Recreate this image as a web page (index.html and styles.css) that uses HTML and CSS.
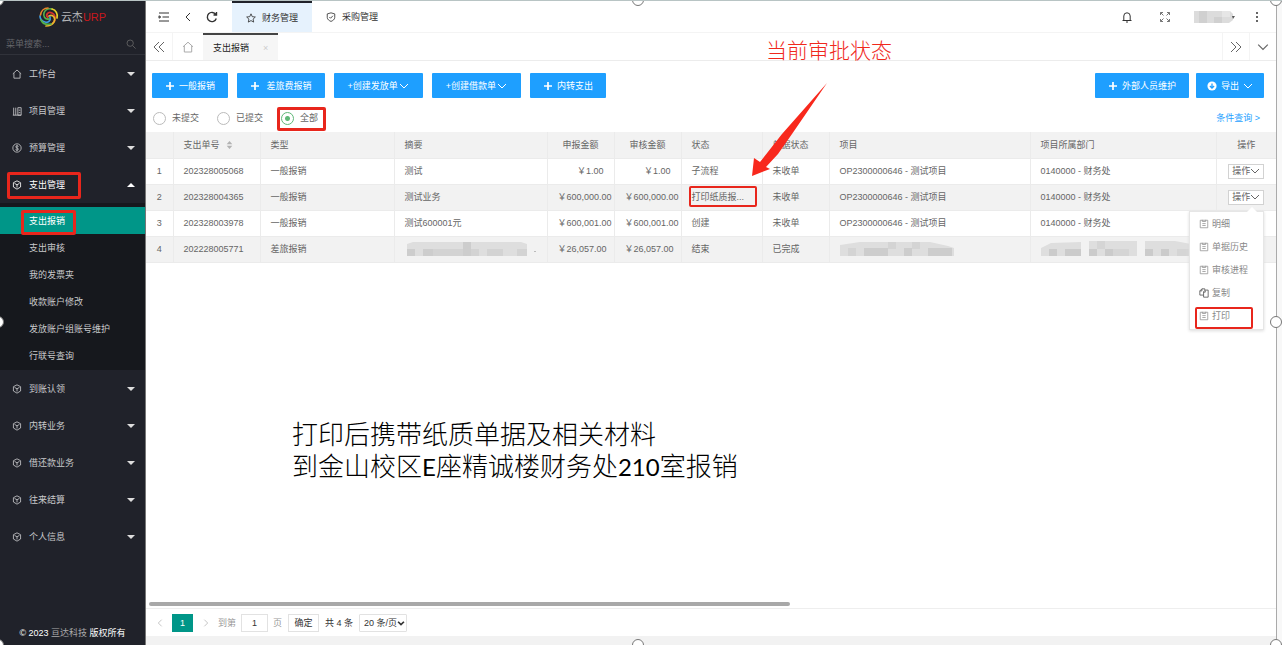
FILE: index.html
```html
<!DOCTYPE html>
<html lang="zh-CN">
<head>
<meta charset="utf-8">
<title>云杰URP</title>
<link rel="stylesheet" href="styles.css">
</head>
<body>
<svg class="defs" aria-hidden="true">
  <symbol id="plus" viewBox="0 0 10 10"><path d="M5 1v8M1 5h8" stroke-width="1.7"/></symbol>
  <symbol id="down" viewBox="0 0 10 10"><path d="M1 3l4 4 4-4"/></symbol>
  <symbol id="home" viewBox="0 0 12 12"><path d="M1 5.8L6 1.2l5 4.6M2.3 5v6h7.4V5"/></symbol>
  <symbol id="cube" viewBox="0 0 12 12"><path d="M6 1l4.3 2.2v5.2L6 11 1.7 8.400V3.200zM3 4l3 1.800L9 4M6 5.800V9"/></symbol>
  <symbol id="doc" viewBox="0 0 12 12"><path d="M1.500 1.500h9v9h-9zM4 1v2h4V1M4 5.500h4M4 7.800h4"/></symbol>
</svg>
<div class="app">
  <aside class="sidebar">
    <div class="logo">
      <svg class="logo-mark" viewBox="0 0 20 20" fill="none" stroke-width="1.700" stroke-linecap="round">
        <path stroke="#d8322c" d="M9 11C6 8 9 4 13 6c4 2 4 7 1 10"/>
        <path stroke="#e8b52c" d="M10 9c4-2 7 2 5 6-2 3-5 4-8 4"/>
        <path stroke="#3c9be0" d="M11 10c1 4-2 6-5 5-4-1-5-4-5-6"/>
        <path stroke="#54b04a" d="M10 12C6 13 4 9 5 6c1-3 4-5 8-4"/>
        <path stroke="#e8872c" d="M1.500 8C2 4 5 1 9 1"/>
        <path stroke="#e8d22c" d="M13 2c4 1 6 5 5 9"/>
        <path stroke="#54b04a" d="M2 13c2 4 6 5 10 4"/>
      </svg>
      <span>云杰<b>URP</b></span>
    </div>
    <div class="search">
      <input type="text" placeholder="菜单搜索..." aria-label="菜单搜索">
      <svg class="icon" viewBox="0 0 12 12"><circle cx="5" cy="5" r="3.800"/><path d="M8 8l3.500 3.500"/></svg>
    </div>
    <nav class="menu">
      <a class="item" href="#"><svg class="icon"><use href="#home"/></svg>工作台<i class="caret"></i></a>
      <a class="item" href="#"><svg class="icon" viewBox="0 0 12 12"><path d="M2 2v9M4.500 2v9M7 2h4v9H7zM8 5h2M8 8h2M1 11h10"/></svg>项目管理<i class="caret"></i></a>
      <a class="item" href="#"><svg class="icon" viewBox="0 0 12 12"><circle cx="6" cy="6" r="5"/><path d="M7.800 4.200C7 3 4.300 3.300 4.400 4.700 4.500 6.200 7.700 5.700 7.700 7.300 7.700 9 4.700 9 4.200 7.700M6 2.500v7"/></svg>预算管理<i class="caret"></i></a>
      <a class="item open mark mark-group" href="#"><svg class="icon"><use href="#cube"/></svg>支出管理<i class="caret up"></i></a>
      <div class="submenu">
        <a class="active mark mark-sub" href="#">支出报销</a>
        <a href="#">支出审核</a>
        <a href="#">我的发票夹</a>
        <a href="#">收款账户修改</a>
        <a href="#">发放账户组账号维护</a>
        <a href="#">行联号查询</a>
      </div>
      <a class="item" href="#"><svg class="icon"><use href="#cube"/></svg>到账认领<i class="caret"></i></a>
      <a class="item" href="#"><svg class="icon"><use href="#cube"/></svg>内转业务<i class="caret"></i></a>
      <a class="item" href="#"><svg class="icon"><use href="#cube"/></svg>借还款业务<i class="caret"></i></a>
      <a class="item" href="#"><svg class="icon"><use href="#cube"/></svg>往来结算<i class="caret"></i></a>
      <a class="item" href="#"><svg class="icon"><use href="#cube"/></svg>个人信息<i class="caret"></i></a>
    </nav>
    <footer class="copyright">© 2023 <span>亘达科技</span> 版权所有</footer>
  </aside>

  <main class="main">
    <header class="topbar">
      <button class="tool" aria-label="收起菜单"><svg class="icon" viewBox="0 0 12 12"><path d="M1 2h10M4.500 6H11M1 10h10M1 4.800v2.400L2.800 6z"/></svg></button>
      <button class="tool" aria-label="后退"><svg class="icon" viewBox="0 0 12 12"><path d="M8 2L4 6l4 4"/></svg></button>
      <button class="tool" aria-label="刷新"><svg class="icon bold" viewBox="0 0 12 12"><path d="M10.300 7.500A4.600 4.600 0 1 1 9.800 3.500M10.500 1v3H7.500"/></svg></button>
      <a class="module current" href="#"><svg class="icon" viewBox="0 0 12 12"><path d="M6 1l1.500 3.400 3.700.4-2.700 2.500.7 3.600L6 9.100l-3.200 1.800.7-3.600L.8 4.800l3.700-.4z"/></svg>财务管理</a>
      <a class="module" href="#"><svg class="icon" viewBox="0 0 12 12"><path d="M6 1l4.500 1.300v4.200C10.500 9 8 10.500 6 11.300 4 10.500 1.500 9 1.500 6.500V2.300zM4 6l1.500 1.500L8.300 4.500"/></svg>采购管理</a>
      <div class="user-tools">
        <button class="tool" aria-label="通知"><svg class="icon" viewBox="0 0 12 12"><path d="M1.500 9.500h9M2.800 9.500V5a3.200 3.200 0 0 1 6.400 0v4.500M5 11h2"/></svg></button>
        <button class="tool" aria-label="全屏"><svg class="icon thin" viewBox="0 0 12 12"><path d="M1.500 4V1.500H4M1.500 1.500l3 3M8 1.500h2.500V4M10.500 1.500l-3 3M1.500 8v2.500H4M1.500 10.500l3-3M10.500 8v2.500H8M10.500 10.500l-3-3"/></svg></button>
        <button class="tool user" aria-label="用户"><svg viewBox="0 0 42 14"><path fill="#dcdcdc" d="M0 1h36l3 3v6l-4 3H0z"/><path fill="#d0d0d0" d="M5 1h8v12H5zM20 7h8v6h-8z"/><path fill="#e6e6e6" d="M28 1h8v6h-8z"/><path fill="#555" d="M38 6h3l-2 3z"/></svg></button>
        <button class="tool" aria-label="更多"><svg class="icon dots" viewBox="0 0 12 12"><circle cx="6" cy="2" r="1"/><circle cx="6" cy="6" r="1"/><circle cx="6" cy="10" r="1"/></svg></button>
      </div>
    </header>

    <div class="tabs">
      <button class="tool" aria-label="向左"><svg class="icon" viewBox="0 0 12 12"><path d="M6 1L1 6l5 5M11 1L6 6l5 5"/></svg></button>
      <button class="tool line" aria-label="首页"><svg class="icon pale"><use href="#home"/></svg></button>
      <a class="tab" href="#">支出报销<span class="close">×</span></a>
      <div class="tab-tools">
        <button class="tool line" aria-label="向右"><svg class="icon" viewBox="0 0 12 12"><path d="M1 1l5 5-5 5M6 1l5 5-5 5"/></svg></button>
        <button class="tool line" aria-label="展开"><svg class="icon"><use href="#down"/></svg></button>
      </div>
    </div>

    <div class="actions">
      <button class="btn"><svg class="icon"><use href="#plus"/></svg>一般报销</button>
      <button class="btn"><svg class="icon"><use href="#plus"/></svg>&nbsp;差旅费报销</button>
      <button class="btn wide">+创建发放单<svg class="icon"><use href="#down"/></svg></button>
      <button class="btn wide">+创建借款单<svg class="icon"><use href="#down"/></svg></button>
      <button class="btn"><svg class="icon"><use href="#plus"/></svg>内转支出</button>
      <div class="actions-right">
        <button class="btn"><svg class="icon"><use href="#plus"/></svg>外部人员维护</button>
        <button class="btn export"><svg class="icon" viewBox="0 0 12 12"><circle cx="6" cy="6" r="5.500" fill="#fff" stroke="none"/><path stroke="#1e9fff" stroke-width="1.500" d="M6 3v5.500M3.500 6L6 8.500 8.500 6"/></svg>导出<svg class="icon"><use href="#down"/></svg></button>
      </div>
    </div>

    <div class="filters">
      <label><input type="radio" name="state">未提交</label>
      <label><input type="radio" name="state">已提交</label>
      <label class="mark mark-all"><input type="radio" name="state" checked>全部</label>
      <a class="query" href="#">条件查询 &gt;</a>
    </div>

    <div class="table-area">
      <table>
        <colgroup><col class="c-no"><col class="c-id"><col class="c-type"><col class="c-sum"><col class="c-amt"><col class="c-amt"><col class="c-state"><col class="c-amt"><col class="c-proj"><col class="c-dept"><col class="c-op"></colgroup>
        <thead>
          <tr><th></th><th>支出单号 <svg class="sort" viewBox="0 0 8 10"><path d="M4 0l3.500 4h-7zM4 10L.5 6h7z"/></svg></th><th>类型</th><th>摘要</th><th class="center">申报金额</th><th class="center">审核金额</th><th>状态</th><th>单据状态</th><th>项目</th><th>项目所属部门</th><th class="center fixed">操作</th></tr>
        </thead>
        <tbody>
          <tr><td class="center">1</td><td>202328005068</td><td>一般报销</td><td>测试</td><td class="num">￥1.00</td><td class="num">￥1.00</td><td>子流程</td><td>未收单</td><td>OP2300000646 - 测试项目</td><td>0140000 - 财务处</td><td class="center fixed"><button class="op">操作<svg class="icon"><use href="#down"/></svg></button></td></tr>
          <tr><td class="center">2</td><td>202328004365</td><td>一般报销</td><td>测试业务</td><td class="num">￥600,000.00</td><td class="num">￥600,000.00</td><td class="mark mark-state">打印纸质报...</td><td>未收单</td><td>OP2300000646 - 测试项目</td><td>0140000 - 财务处</td><td class="center fixed"><button class="op">操作<svg class="icon"><use href="#down"/></svg></button>
            <div class="dropdown">
              <a href="#"><svg class="icon"><use href="#doc"/></svg>明细</a>
              <a href="#"><svg class="icon"><use href="#doc"/></svg>单据历史</a>
              <a href="#"><svg class="icon"><use href="#doc"/></svg>审核进程</a>
              <a href="#"><svg class="icon dark" viewBox="0 0 12 12"><path d="M5.500 4.500l2-2H11V11H5.500zM5.500 8.500H1V3.500L3.500 1H7v1.500M3.500 1v2.500H1M7.500 3v2H5.500"/></svg>复制</a>
              <a class="mark mark-print" href="#"><svg class="icon"><use href="#doc"/></svg>打印</a>
            </div></td></tr>
          <tr><td class="center">3</td><td>202328003978</td><td>一般报销</td><td>测试600001元</td><td class="num">￥600,001.00</td><td class="num">￥600,001.00</td><td>创建</td><td>未收单</td><td>OP2300000646 - 测试项目</td><td>0140000 - 财务处</td><td class="fixed"></td></tr>
          <tr><td class="center">4</td><td>202228005771</td><td>差旅报销</td>
            <td><svg class="mosaic" width="132" height="16" viewBox="0 0 132 16"><path fill="#dedede" d="M2 3l6-2h108l6 2v12H2z"/><path fill="#cdcdcd" d="M2 8h8v7H2zM18 8h10v7H18zM58 1h8v14h-8z"/><path fill="#d3d3d3" d="M28 8h30v7H28zM66 8h8v7h-8zM82 8h16v7H82zM112 8h10v7h-10z"/><path fill="#bbb" d="M129 10h2v1h-2z"/></svg></td>
            <td class="num">￥26,057.00</td><td class="num">￥26,057.00</td><td>结束</td><td>已完成</td>
            <td><svg class="mosaic" width="114" height="16" viewBox="0 0 114 16"><path fill="#dedede" d="M0 4l20-3h70l18 4 6 2v8H0z"/><path fill="#cdcdcd" d="M24 7h24v8H24zM64 7h8v8h-8zM88 7h24v8H88z"/><path fill="#d4d4d4" d="M8 7h8v8H8zM48 1h8v7h-8zM72 1h8v7h-8z"/></svg></td>
            <td><svg class="mosaic" width="150" height="16" viewBox="0 0 150 16"><path fill="#dedede" d="M0 7l10-5 30-1v14H0zM48 0h48v15H48zM104 0h30l16 3v12h-46z"/><path fill="#cbcbcb" d="M8 8h8v7H8zM24 8h16v7H24zM48 8h8v7h-8zM64 8h8v7h-8zM104 8h8v7h-8zM120 8h8v7h-8z"/><path fill="#d5d5d5" d="M56 0h8v8h-8zM72 8h16v7H72zM136 8h14v7h-14z"/></svg></td><td class="fixed"></td></tr>
        </tbody>
      </table>
    </div>

    <div class="scroll"><div class="thumb"></div></div>
    <div class="pager">
      <button class="page-arrow" aria-label="上一页"><svg class="icon" viewBox="0 0 12 12"><path d="M8 2L4 6l4 4"/></svg></button>
      <button class="page-current">1</button>
      <button class="page-arrow" aria-label="下一页"><svg class="icon" viewBox="0 0 12 12"><path d="M4 2l4 4-4 4"/></svg></button>
      <label class="goto">到第<input type="text" value="1">页</label>
      <button class="confirm">确定</button>
      <span>共 4 条</span>
      <span class="page-size"><select aria-label="每页条数"><option>20 条/页</option></select><svg class="icon" viewBox="0 0 12 12"><path d="M2.500 4.500L6 8l3.500-3.500"/></svg></span>
    </div>
  </main>
  <div class="edge"></div>

  <p class="note note-state">当前审批状态</p>
  <svg class="arrow" viewBox="0 0 76 94"><path fill="#f8281c" d="M75 0L30 51 8 79 2 75 0 93 18 86 14 84 26 71 40 51z"/></svg>
  <p class="note note-print">打印后携带纸质单据及相关材料<br>到金山校区<span>E</span>座精诚楼财务处<span>210</span>室报销</p>

  <i class="handle left top"></i><i class="handle center top"></i><i class="handle right top"></i>
  <i class="handle left middle"></i><i class="handle right middle"></i>
  <i class="handle left bottom"></i><i class="handle center bottom"></i><i class="handle right bottom"></i>
</div>
</body>
</html>
```

FILE: styles.css
```css
*, *::before, *::after { box-sizing: border-box; }
body {
  margin: 0;
  font: 9px/12px "Liberation Sans", "Noto Sans CJK SC", sans-serif;
  color: #666;
  background: #fff;
}
a { color: inherit; text-decoration: none; }
button, input, select { font: inherit; color: inherit; margin: 0; }
button { border: 0; padding: 0; background: none; display: inline-flex; align-items: center; justify-content: center; }
.defs { display: none; }
.icon { width: 10px; height: 10px; flex: none; fill: none; stroke: currentColor; stroke-width: 1; }
.tool .icon { width: 12px; height: 12px; }
.icon.bold { stroke-width: 1.4; }
.icon.pale { color: #aaa; }
.icon.thin { color: #777; }
.icon.dots { fill: currentColor; stroke: none; }

.app { position: relative; display: flex; min-height: 100vh; overflow: hidden; border-top: 1px solid #b8c4c4; }

/* sidebar */
.sidebar { width: 146px; flex: none; display: flex; flex-direction: column; background: #20222a; color: #c8c9cb; border-right: 1px solid #777; }
.logo { height: 32px; display: flex; align-items: center; justify-content: center; gap: 2px; font-size: 11px; color: #b5b6b8; }
.logo b { color: #c8181c; font-weight: normal; }
.logo-mark { width: 20px; height: 20px; }
.search { height: 22px; display: flex; align-items: center; padding: 0 9px 0 6px; border-bottom: 1px solid #30323a; color: #666; }
.search input { flex: 1; min-width: 0; border: 0; padding: 0; background: none; outline: 0; }
.search input::placeholder { color: #65666b; }
.item { height: 37px; display: flex; align-items: center; gap: 7px; padding: 0 10px 0 12px; }
.item.open { color: #fff; }
.caret { margin-left: auto; border: 4px solid transparent; border-top-color: #ddd; border-bottom-width: 0; }
.caret.up { border-top-width: 0; border-bottom: 4px solid #fff; }
.submenu { background: #16181d; padding: 4px 0 1px; }
.submenu a { display: flex; align-items: center; height: 27px; padding-left: 29px; }
.submenu .active { background: #009688; color: #fff; }
.copyright { margin-top: auto; padding: 6px 0; text-align: center; color: #fff; }
.copyright span { color: #aaa; }

/* header bars */
.main { flex: 1; min-width: 0; display: flex; flex-direction: column; }
.topbar { height: 32px; display: flex; padding-left: 6px; border-bottom: 1px solid #f4f4f4; color: #333; }
.tool { width: 24px; height: 100%; }
.module { display: flex; align-items: center; gap: 6px; padding: 0 14px; }
.module.current { margin-left: 8px; background: #e6f2fd; border-top: 2px solid #20222a; }
.user-tools, .tab-tools, .actions-right { margin-left: auto; display: flex; }
.user-tools .tool { width: 38px; }
.user-tools .user { width: 46px; margin-left: 8px; }
.user svg { width: 42px; height: 14px; }
.tabs { height: 28px; display: flex; border-bottom: 1px solid #ececec; color: #666; }
.tabs .tool { width: 26px; }
.tabs .tool.line { width: 31px; border-left: 1px solid #f4f4f4; }
.tab { display: flex; align-items: center; gap: 14px; padding: 0 10px; background: #f6f6f6; border-top: 2px solid #444; color: #222; }
.close { color: #ccc; }
.tab-tools .tool.line { width: 27px; }

/* actions and filters */
.actions { display: flex; gap: 9px; padding: 12px 12px 0 6px; }
.actions-right { gap: 7px; }
.btn { height: 25px; padding: 0 13px; gap: 4px; background: #1e9fff; border-radius: 1px; color: #fff; }
.btn.wide { padding: 0 14px; gap: 1px; }
.btn.export { padding: 0 11px; }
.filters { height: 34px; display: flex; align-items: center; gap: 18px; padding: 6px 16px 0 7px; }
.filters label { display: flex; align-items: center; gap: 6px; }
.filters input { appearance: none; width: 13px; height: 13px; border: 1px solid #bbb; border-radius: 50%; }
.filters input:checked { border-color: #5fb878; background: radial-gradient(circle, #5fb878 2px, transparent 3px); }
.query { margin-left: auto; color: #1e9fff; }

/* table */
table { width: 100%; table-layout: fixed; border-collapse: collapse; }
.c-no { width: 27px; }
.c-id { width: 87px; }
.c-type { width: 134px; }
.c-sum { width: 153px; }
.c-amt { width: 67px; }
.c-state { width: 81px; }
.c-dept { width: 186px; }
.c-op { width: 60px; }
th, td { height: 26px; padding: 0 10px; border: solid #ebebeb; border-width: 0 1px 1px 0; font-weight: normal; text-align: left; white-space: nowrap; }
tr > :last-child { border-right: 0; }
thead tr, tbody tr:nth-child(even) { background: #f2f2f2; }
.center { text-align: center; }
.num { text-align: right; }
td.center:first-child { padding: 0; }
.fixed { position: relative; border-left: 1px solid #ddd; }
.sort { width: 7px; height: 8px; margin-left: 4px; fill: #b2b2b2; vertical-align: middle; }
.mosaic { display: block; }
.op { height: 15px; padding: 0 3px; border: 1px solid #d2d2d2; background: #fff; vertical-align: middle; }
.dropdown { position: absolute; z-index: 2; top: 26px; right: 12px; width: 75px; padding: 1px 0; background: #fff; border: 1px solid #e6e6e6; box-shadow: 0 1px 3px #ddd; color: #888; }
.dropdown::before { content: ""; position: absolute; top: -5px; right: 6px; border: 5px solid transparent; border-top: 0; border-bottom-color: #fff; }
.dropdown a { display: flex; align-items: center; gap: 3px; height: 23px; padding-left: 9px; }
.dropdown .icon { color: #999; }
.dropdown .dark { color: #555; }

/* pagination */
.scroll { margin-top: auto; padding: 0 3px 2px; }
.thumb { width: 57%; height: 4px; border-radius: 2px; background: #a8a8a8; }
.pager { height: 37px; display: flex; align-items: center; gap: 6px; padding: 0 7px; color: #333; border-top: 1px solid #eee; border-bottom: 9px solid #f2f2f2; }
.page-arrow { width: 13px; color: #bbb; }
.page-current { width: 21px; height: 18px; background: #009688; color: #fff; }
.goto { display: flex; align-items: center; gap: 5px; color: #999; }
.goto input { width: 27px; height: 18px; border: 1px solid #e2e2e2; text-align: center; color: #333; padding: 0; }
.confirm { width: 31px; height: 18px; border: 1px solid #e2e2e2; }
.page-size { position: relative; display: flex; }
.page-size select { appearance: none; width: 48px; height: 18px; padding: 0 0 0 4px; border: 1px solid #e2e2e2; border-radius: 1px; background: #fff; }
.page-size .icon { position: absolute; right: 1px; top: 4px; stroke-width: 2; pointer-events: none; }
.edge { width: 6px; flex: none; background: #f8f8f8; border-left: 1px solid #aaa; }

/* annotations lying over the page */
.mark { position: relative; }
.mark::after { content: ""; position: absolute; border: 3px solid #e8261c; border-radius: 2px; }
.mark-group::after { left: 7px; top: 6px; width: 74px; height: 27px; }
.mark-sub::after { left: 21px; top: 3px; width: 55px; height: 25px; }
.mark-all::after { inset: -5px -8px -6px -4px; }
.mark-state::after { left: 7px; top: 1px; width: 68px; height: 21px; border-width: 2px; }
.mark-print::after { left: 5px; top: 2px; width: 58px; height: 22px; border-width: 2px; }
.note { position: absolute; margin: 0; z-index: 3; white-space: nowrap; }
.note-state { left: 766px; top: 36px; font-size: 21px; line-height: 28px; color: #f0281c; font-weight: 300; }
.note-print { left: 292px; top: 417px; font: 300 26px/32px Lato, "Noto Sans CJK SC", sans-serif; color: #000; }
.note-print span { font-size: 24px; font-weight: 400; }
.arrow { position: absolute; z-index: 3; left: 752px; top: 82px; width: 76px; height: 94px; }
.handle { position: absolute; z-index: 4; width: 12px; height: 12px; border: 1px solid #777; border-radius: 50%; background: #fff; }
.handle.left { left: -8px; }
.handle.center { left: calc(50% - 9px); }
.handle.right { right: 0; }
.handle.top { top: -7px; }
.handle.middle { top: 315px; }
.handle.bottom { bottom: -6px; }
```
